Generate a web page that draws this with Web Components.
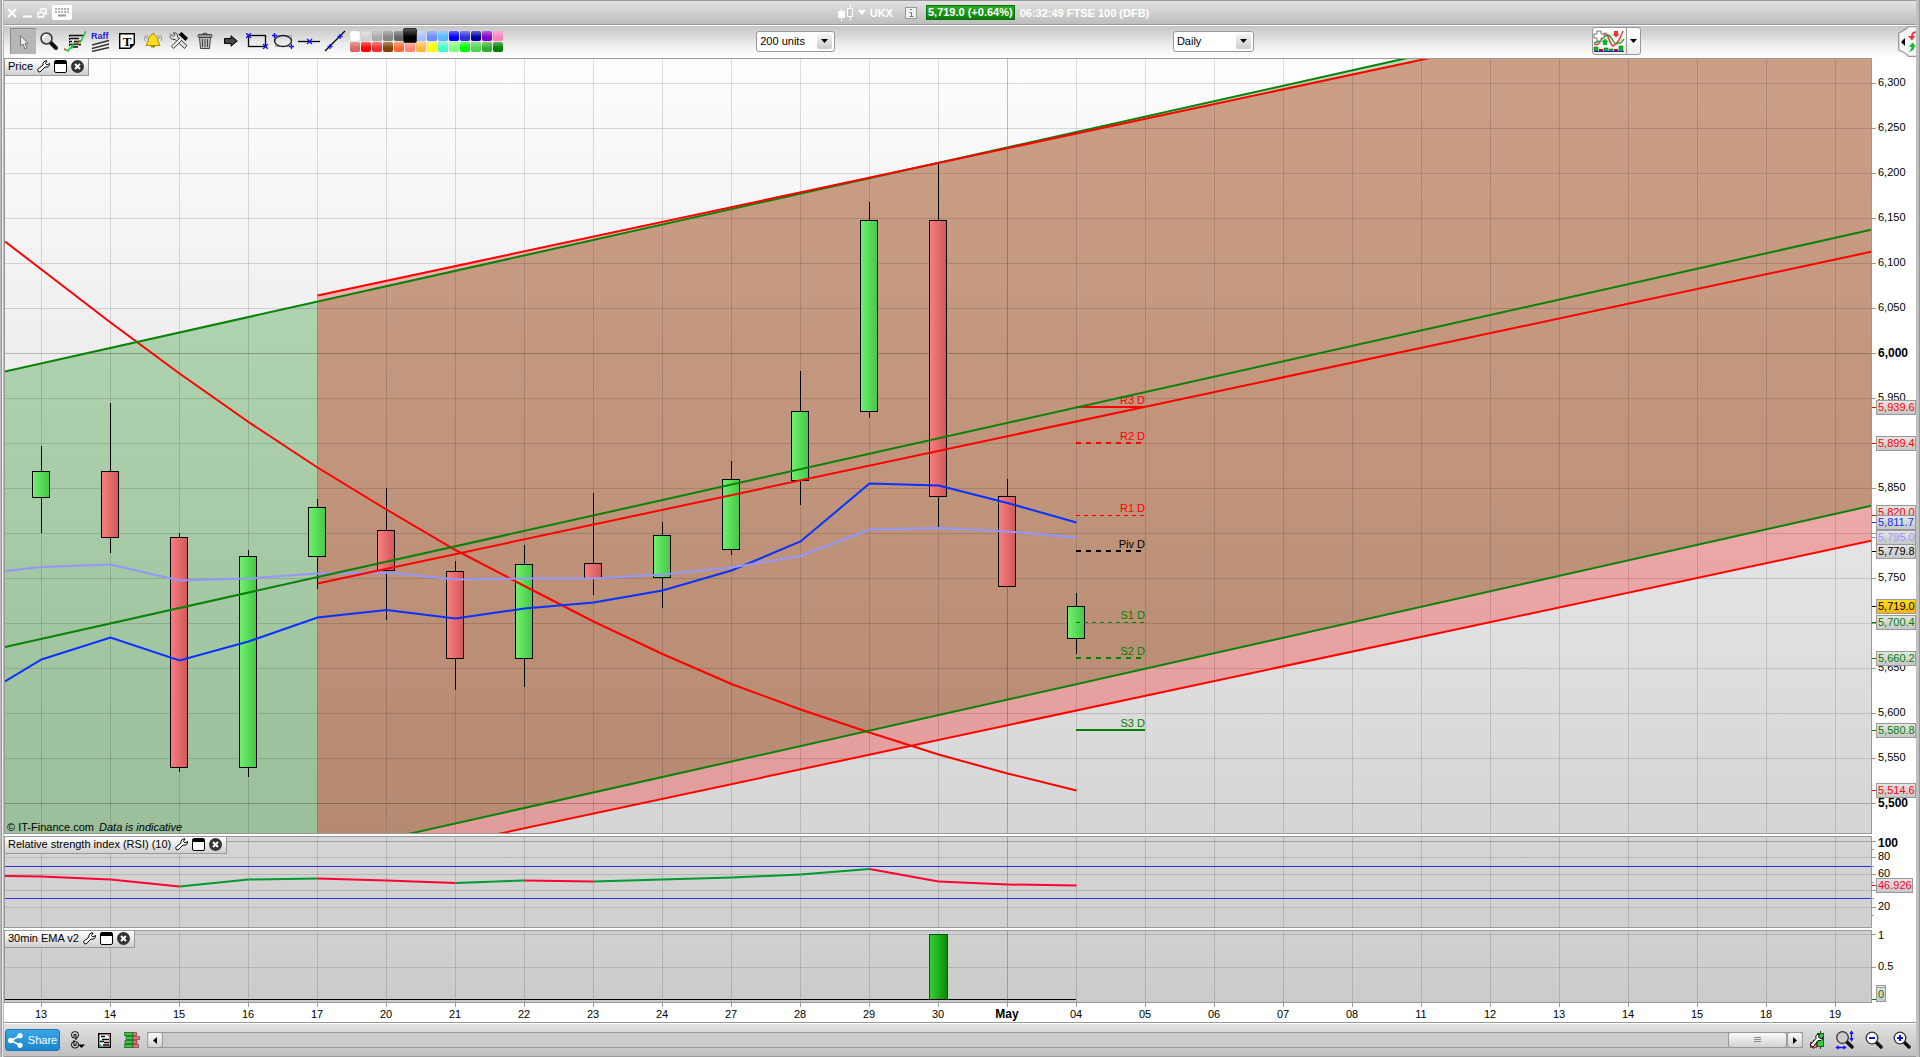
<!DOCTYPE html>
<html lang="en">
<head>
<meta charset="utf-8">
<title>UKX - FTSE 100 (DFB)</title>
<style>
  html, body { margin: 0; height: 100%; }
  body { font: 11px/16px "Liberation Sans", Arial, sans-serif; color: #000; background: #fff; }
</style>
</head>
<body>
<trading-window></trading-window>
<script>
const ICONS = {
  close: [10, 10, '<path d="M1 1L9 9M9 1L1 9" stroke="#fff" stroke-width="2"/>'],
  minimise: [10, 10, '<path d="M1 8.500H10" stroke="#fff" stroke-width="2"/>'],
  restore: [10, 10, '<path d="M3.500 3V1H9V6H7M1 4.500H6.500V9H1Z" fill="none" stroke="#fff" stroke-width="1.500"/>'],
  keyboard: [20, 15, '<rect width="20" height="15" rx="2" fill="#fff"/><path d="M3 4h14M3 7h14" stroke="#999" stroke-width="1.500" stroke-dasharray="2 1"/><path d="M6 10.500h8" stroke="#999" stroke-width="2"/>'],
  candles: [16, 16, '<path d="M3.500 4v12M12.500 0v15" stroke="#fff"/><rect x="0" y="6" width="7" height="7" fill="#fff"/><rect x="9.500" y="3.500" width="5" height="8" fill="#c9c9c9" stroke="#fff"/>'],
  caretWhite: [8, 5, '<path d="M0 0H8L4 5Z" fill="#fff"/>'],
  caret: [7, 4, '<path d="M0 0H7L3.500 4Z"/>'],
  info: [12, 12, '<rect x=".5" y=".5" width="11" height="11" fill="#f2f2f2" stroke="#999"/><path d="M5 2.500h2M4.500 5.500h2v3.500M4.500 9.500h4" stroke="#777" fill="none"/>'],
  cursor: [25, 25, '<path d="M9.500 6.500V17L12 15L14 20L16 19L14 14.500H17Z" fill="#eee" stroke="#777"/>'],
  magnifier: [18, 18, '<path d="M10.500 10.500L16 16" stroke="#111" stroke-width="4" stroke-linecap="round"/><circle cx="6.500" cy="6.500" r="5.500" fill="#ddd" stroke="#333" stroke-width="1.500"/><path d="M3 6.500Q3.500 3 7 3" stroke="#fff" stroke-width="2" fill="none"/>'],
  strategy: [22, 22, '<path d="M5 5.500h14M6 8.500h9M5 11.500h3M10 11.500h7M5 14.500h12M7 17h7" stroke="#111" stroke-width="1.500"/><path d="M5.500 5v11" stroke="#111" stroke-dasharray="2 1"/><path d="M0 19l2 1" stroke="#e22" stroke-width="1.500"/><path d="M1 19l3 2l2-3l2 0l2-5l3 1l2-3l2 0l5-10" fill="none" stroke="#1c3" stroke-width="1.500"/><path d="M12 14l3-3" stroke="#e22" stroke-width="1.500"/>'],
  raff: [20, 22, '<text x="0" y="9" font-size="9" fill="#22d" font-family="Liberation Sans, sans-serif" font-weight="700">Raff</text><path d="M1 15L18 10.500M1 18.500L18 14M1 21.500L18 17.500" stroke="#333" stroke-width="1.300"/>'],
  text: [16, 16, '<path d="M.7.7H15.300V11L11 15.300H.7Z" fill="#fff" stroke="#000" stroke-width="1.400"/><path d="M11 15v-4h4z"/><text x="8" y="12.500" text-anchor="middle" font-size="13" font-weight="700" font-family="Liberation Serif, serif">T</text>'],
  bell: [20, 18, '<path d="M10 1.500Q11.500 1.500 11.500 3Q15 4.500 15 9L17 13.500H3L5 9Q5 4.500 8.500 3Q8.500 1.500 10 1.500Z" fill="#fd2" stroke="#a80"/><path d="M8 14.500h4" stroke="#a80" stroke-width="2"/><path d="M3 3Q0 6 2 9M5 3Q3 5 4 7M17 3Q20 6 18 9M15 3Q17 5 16 7" fill="none" stroke="#999"/>'],
  tools: [20, 18, '<path d="M1 1.500L4 4.500L6 2.500L4 1Q9 0 8.500 5L18 13.500L15.500 16.500L6 7.500Q1 8 1 3.500" fill="#ddd" stroke="#444"/><path d="M11 6L2.500 14L4.500 16.500L13 8" fill="#eee" stroke="#444"/><path d="M9.500 2.500L12.500 0L19 6L16.500 9Z"/>'],
  trash: [16, 18, '<path d="M2.500 5.500H13.500L12.500 16.500H3.500Z" fill="#bbb" stroke="#444"/><rect x="1" y="2.500" width="14" height="3" rx="1" fill="#999" stroke="#444"/><path d="M5.500 2Q8 0 10.500 2M5.500 7v8M8 7v8M10.500 7v8" fill="none" stroke="#444"/>'],
  arrow: [14, 12, '<path d="M.5 3.500H7V.8L13.300 6L7 11.200V8.500H.5Z" fill="#444" stroke="#000"/>'],
  rect: [22, 16, '<rect x="2.500" y="2.500" width="17" height="11" fill="none" stroke="#000" stroke-width="1.300"/><path d="M0 0l5 5M5 0L0 5M17 11l5 5M22 11l-5 5" stroke="#11f" stroke-width="1.300"/>'],
  ellipse: [22, 16, '<rect x="3.500" y="2.500" width="16" height="11" fill="none" stroke="#aaa"/><ellipse cx="11" cy="8" rx="8.500" ry="5.500" fill="none" stroke="#222" stroke-width="1.300"/><path d="M0 2.500h5M2.500 0v5M17 13.500h5M19.500 11v5" stroke="#11f" stroke-width="1.300"/>'],
  hline: [22, 8, '<path d="M0 4.500H22" stroke="#000" stroke-width="1.300"/><path d="M9 2l5 5M14 2L9 7" stroke="#11f" stroke-width="1.300"/>'],
  diag: [22, 22, '<path d="M1 21L21 1" stroke="#000" stroke-width="1.300"/><path d="M3.500 16.500h5M6 14v5M13.500 6.500h5M16 4v5" stroke="#11f" stroke-width="1.300"/>'],
  wrench: [13, 13, '<path d="M.6 9.500L6 5Q5.500 1 10 .8L8.500 3.500L10 5L12.500 3.500Q12.500 8 8 7L3 12Q1 12.500 .6 9.500Z" fill="#fff" stroke="#000"/>'],
  pane: [13, 13, '<rect x=".5" y=".5" width="12" height="12" rx="1.500" fill="#fff" stroke="#000"/><path d="M1 1h11v3H1z"/>'],
  remove: [13, 13, '<circle cx="6.500" cy="6.500" r="6.500" fill="#333"/><path d="M4 4l5 5M9 4L4 9" stroke="#fff" stroke-width="2"/>'],
  indicators: [32, 22, '<path d="M11 6Q14 1 20 15Q16 13 11 6ZM22 13Q27 12 30 3L29 12Z" fill="#d5e0cc"/><path d="M1 14Q6 17 10 6Q12 -1 16 9T21 15Q25 14 30 1" fill="none" stroke="#d33" stroke-width="1.300"/><path d="M1 13Q6 12 11 7Q15 2 19 9T25 13Q28 14 31 9" fill="none" stroke="#292" stroke-width="1.300"/><path d="M4 1h4v3h3v4H8v3H4V8H1V4h3z" fill="#fff" stroke="#777"/><path d="M10 15V12H8.500L12 8.500L15.500 12H14V15Z" fill="#0b2"/><path d="M21 1h4v3h1.500L23 7.500L19.500 4H21z" fill="#e33"/><path d="M1 17h4v4H1zM11 18h4v3h-4zM16 19h4v2h-4zM26 16h4v5h-4z" fill="#1b1" stroke="#062" stroke-width=".5"/><path d="M6 19h4v2H6zM21 19h4v2h-4z" fill="#c11"/><path d="M1 21.500H31" stroke="#22d"/>'],
  panelTab: [18, 31, '<path d="M18 .7H10.500Q8 4 .7 7V24Q8 27 10.500 30.300H18" fill="#f6f6f6" stroke="#999" stroke-width="1.300"/><path d="M7 12v8l-4-4z"/><path d="M17.500 5Q13 6 13 10H10L14 14.500L17 10H15Q15 7 18 7Z" fill="#e33"/><path d="M10 25.500Q13 25 13.500 21H11L14.500 16.500L18 20.500H16.500Q16 26 10 25.500Z" fill="#1b3"/>'],
  share: [15, 15, '<path d="M12.500 2.500L3 7.500L12.500 12.500" fill="none" stroke="#fff" stroke-width="1.500"/><g fill="#fff"><circle cx="12" cy="2.700" r="2.600"/><circle cx="2.700" cy="7.500" r="2.700"/><circle cx="12" cy="12.300" r="2.600"/></g>'],
  chain: [15, 18, '<g fill="none" stroke="#000"><rect x="1.500" y=".7" width="7" height="6.500" rx="3"/><rect x="1.500" y="10.500" width="7" height="6.500" rx="3"/><path d="M4 6V3.500h2V9M4 9v5.500h2V12"/></g><path d="M8 13.500h7L11.500 17z"/>'],
  list: [13, 15, '<path d="M.7.7H12.300V14.300H.7Z" fill="#fff" stroke="#000" stroke-width="1.400"/><path d="M3 3.500h4M4 6.500h7M2 8.500h4M6 9.500h5M5 12h6" stroke="#000" stroke-width="1.500"/><path d="M8 1h4v4z" fill="#e66"/><path d="M1 10v4h4z" fill="#1b3"/>'],
  book: [16, 16, '<path d="M0 .5h9v3H0zM2 4.500h7v3H2zM1 8.500h8v3H1zM0 12.500h9v3H0z" fill="#3c4" stroke="#151" stroke-width=".7"/><path d="M9 .5h3.500v3H9zM9 4.500h6.500v3H9zM9 8.500h4v3H9zM9 12.500h5.500v3H9z" fill="#e77" stroke="#733" stroke-width=".7"/>'],
  left: [4, 7, '<path d="M4 0V7L0 3.500Z"/>'],
  right: [4, 7, '<path d="M0 0V7L4 3.500Z"/>'],
  grip: [7, 6, '<path d="M0 .5h7M0 2.500h7M0 4.500h7" stroke="#888"/>'],
  candleTool: [16, 20, '<path d="M4.500 10v9M11.500 1v18" stroke="#333"/><rect x="1.500" y="12.500" width="6" height="5" fill="#d88" stroke="#844"/><rect x="8.500" y="3.500" width="6" height="13" fill="#3c4" stroke="#161"/><path d="M1 15L7 8.500Q6 4 10.500 4.500L9.500 7L11 8.500L14 7.500Q13 11.500 9 10.500L4 17Z" fill="#fff" stroke="#000"/>'],
  zoomFit: [20, 20, '<path d="M11 11L17 17" stroke="#111" stroke-width="3.500" stroke-linecap="round"/><circle cx="7.500" cy="7.500" r="5.800" fill="#ccc" stroke="#333" stroke-width="1.300"/><path d="M16.500 2v8M2 17.500h8M15 4l1.500-2.500L18 4M15 8l1.500 2.500L18 8M3.500 16L1.500 17.500L3.500 19M8.500 16l2 1.500l-2 1.500" fill="none" stroke="#11f" stroke-width="1.300"/>'],
  zoomOut: [18, 18, '<path d="M11 11L16 16" stroke="#111" stroke-width="3.500" stroke-linecap="round"/><circle cx="7" cy="7" r="5.800" fill="#fff" stroke="#333" stroke-width="1.300"/><path d="M4 7h6" stroke="#11f" stroke-width="2"/>'],
  zoomIn: [18, 18, '<path d="M11 11L16 16" stroke="#111" stroke-width="3.500" stroke-linecap="round"/><circle cx="7" cy="7" r="5.800" fill="#fff" stroke="#333" stroke-width="1.300"/><path d="M4 7h6M7 4v6" stroke="#11f" stroke-width="2"/>']
};

const BUTTON_RESET = `button { font: inherit; color: inherit; margin: 0; padding: 0; border: 0; background: none; display: flex; align-items: center; justify-content: center; }`;

class ShadowElement extends HTMLElement {
  constructor() { super(); this.attachShadow({ mode: 'open' }); }
  connectedCallback() { this.shadowRoot.innerHTML = this.template(); this.ready(); }
  template() { return ''; }
  ready() {}
}

customElements.define('ui-icon', class extends ShadowElement {
  template() {
    const [w, h, body] = ICONS[this.getAttribute('name')];
    return `<style>:host{display:block;flex:none;width:${w}px;height:${h}px}svg{display:block}</style>
      <svg width="${w}" height="${h}" viewBox="0 0 ${w} ${h}" aria-hidden="true">${body}</svg>`;
  }
});

customElements.define('title-bar', class extends ShadowElement {
  template() {
    return `<style>${BUTTON_RESET}
      :host { display: flex; align-items: center; box-sizing: border-box; height: 25px; padding: 0 1px 0 3px;
        background: linear-gradient(#e2e2e2, #bdbdbd); border-top: 1px solid #999; border-bottom: 1px solid #999; color: #fff; font-weight: 700; }
      .window { display: flex; align-items: center; gap: 5px; }
      .quote { margin: 0 auto; display: flex; align-items: center; gap: 5px; }
      .symbol { display: flex; align-items: center; gap: 4px; margin-right: 7px; }
      .change { background: linear-gradient(#2dab2d, #087d08); border: 1px solid #067306; padding: 0 1px; line-height: 13px; margin-left: 4px; }
    </style>
    <div class="window">
      <button aria-label="Close"><ui-icon name="close"></ui-icon></button>
      <button aria-label="Minimise"><ui-icon name="minimise"></ui-icon></button>
      <button aria-label="Restore"><ui-icon name="restore"></ui-icon></button>
      <button aria-label="Keyboard"><ui-icon name="keyboard"></ui-icon></button>
    </div>
    <div class="quote">
      <button class="symbol"><ui-icon name="candles"></ui-icon><ui-icon name="caretWhite"></ui-icon><span>UKX</span></button>
      <button aria-label="Information"><ui-icon name="info"></ui-icon></button>
      <span class="change">5,719.0 (+0.64%)</span>
      <span>06:32:49 FTSE 100 (DFB)</span>
    </div>`;
  }
});

customElements.define('drop-down', class extends ShadowElement {
  template() {
    const label = this.getAttribute('label');
    return `<style>
      :host { display: block; flex: none; }
      .box { display: grid; align-items: center; width: var(--width, 79px); height: 21px; box-sizing: border-box; }
      select, .cap { grid-area: 1 / 1; }
      select { appearance: none; font: inherit; color: #000; height: 21px; width: 100%; box-sizing: border-box; padding: 0 20px 0 3px;
        background: #fff; border: 1px solid #999; border-radius: 3px; }
      .cap { justify-self: end; margin-right: 3px; width: 15px; height: 15px; display: flex; align-items: center; justify-content: center;
        background: linear-gradient(#f4f4f4, #ccc); border-radius: 2px; pointer-events: none; z-index: 1; }
    </style>
    <div class="box"><select aria-label="${label}"><option>${this.getAttribute('value')}</option></select>
    <span class="cap"><ui-icon name="caret"></ui-icon></span></div>`;
  }
});

customElements.define('colour-palette', class extends ShadowElement {
  template() {
    const colours = ['#fff','#d2d2d2','#aaa','#888','#666','#000','#a8c4ff','#6a8cff','#55bbff','#0000ff','#3030dd','#0000a0','#8800cc','#ff80c0',
      '#dd6666','#ff0000','#ee3030','#884000','#ff6a33','#ff8c74','#ffbb44','#ffff00','#44ffcc','#80ff80','#00ff00','#50d850','#30b030','#008000'];
    return `<style>
      :host { display: block; flex: none; }
      div { display: grid; grid-template-columns: repeat(14, 10px); grid-auto-rows: 10px; gap: 1px; }
      button { padding: 0; border: 0; border-radius: 2px; background: linear-gradient(#fff6, #fff0 60%) var(--c); box-shadow: inset 0 0 1px #0005; }
      button.on { margin: -3px -2px -2px; border: 1px solid #333; background: linear-gradient(#555, #000 60%); z-index: 1; }
    </style><div>${colours.map((c, i) => `<button aria-label="Colour ${c}" style="--c:${c}" class="${i === 5 ? 'on' : ''}"></button>`).join('')}</div>`;
  }
});

customElements.define('tool-bar', class extends ShadowElement {
  template() {
    const tools = ['cursor','magnifier','strategy','raff','text','bell','tools','trash','arrow','rect','ellipse','hline','diag'];
    return `<style>${BUTTON_RESET}
      :host { display: flex; align-items: center; box-sizing: border-box; height: 33px; padding: 0 0 2px 6px;
        background: linear-gradient(#c6c6c6, #e6e6e6 50%, #e9e9e9 50%, #fff); border-top: 1px solid #fff; }
      .tools { display: flex; flex: none; margin-right: 2px; }
      .tools button { width: 26px; height: 26px; }
      .tools .on { background: #b6b6b6; box-shadow: inset 1px 1px #8a8a8a; }
      .g1 { flex: 60; } .g2 { flex: 80; } .g3 { flex: 61; }
      .wide { --width: 81px; }
      .add { display: flex; height: 28px; box-sizing: border-box; border: 1px solid #999; border-radius: 3px; background: linear-gradient(#fff, #eee); }
      .add button:first-child { width: 34px; border-right: 1px solid #999; }
      .add button:last-child { width: 13px; }
    </style>
    <div class="tools">${tools.map((t, i) => `<button aria-label="${t}" class="${i ? '' : 'on'}"><ui-icon name="${t}"></ui-icon></button>`).join('')}</div>
    <colour-palette></colour-palette>
    <span class="g1"></span>
    <drop-down label="Units" value="200 units"></drop-down>
    <span class="g2"></span>
    <drop-down class="wide" label="Period" value="Daily"></drop-down>
    <span class="g2"></span>
    <div class="add"><button aria-label="Add indicator"><ui-icon name="indicators"></ui-icon></button><button aria-label="More"><ui-icon name="caret"></ui-icon></button></div>
    <span class="g3"></span>
    <button aria-label="Side panel"><ui-icon name="panelTab"></ui-icon></button>`;
  }
});

/* A plot with its value axis. Subclasses draw in a 1866-unit wide space that is scaled to the box. */
const STEP = 69, FIRST = 41, COUNT = 27;
const xs = Array.from({ length: COUNT }, (_, i) => FIRST + i * STEP);
const GRID = 'rgba(0,0,0,.13)', MAJOR = 'rgba(0,0,0,.24)';

class ChartPanel extends ShadowElement {
  template() {
    return `<style>${BUTTON_RESET}
      :host { display: grid; grid-template-columns: minmax(0, 1fr) 44px; position: relative; box-sizing: border-box; }
      .plot { border: 1px solid #999; background: linear-gradient(var(--from), var(--to)); min-width: 0; min-height: 0; overflow: hidden; }
      .axis { padding: 1px 0; min-height: 0; }
      svg { display: block; width: 100%; height: 100%; overflow: visible; }
      .plot svg { overflow: hidden; }
      header { position: absolute; left: 1px; top: 1px; display: flex; align-items: center; gap: 4px; height: 14px; padding: 0 4px 2px 3px;
        background: linear-gradient(#fff, #cfcfcf); border-right: 1px solid #999; border-bottom: 1px solid #999; }
      ::slotted(*) { position: absolute; left: 3px; bottom: 0; }
    </style>
    <div class="plot"><svg role="img" aria-label="${this.title_}"></svg></div><div class="axis"><svg></svg></div>
    <header><span>${this.title_}</span>
      <button aria-label="Settings"><ui-icon name="wrench"></ui-icon></button>
      <button aria-label="Detach"><ui-icon name="pane"></ui-icon></button>
      <button aria-label="Remove"><ui-icon name="remove"></ui-icon></button></header>
    <slot></slot>`;
  }
  ready() {
    [this.plotSvg, this.axisSvg] = this.shadowRoot.querySelectorAll('svg');
    this.draw();
    new ResizeObserver(() => this.draw()).observe(this);
  }
  draw() {
    const box = this.plotSvg.getBoundingClientRect();
    this.kx = box.width / 1866; this.ky = box.height / this.span; this.h = box.height; this.w = box.width;
    this.plotSvg.innerHTML = this.plot();
    this.axisSvg.innerHTML = `<defs><linearGradient id="t" x2="0" y2="1"><stop stop-color="#e6e6e6"/><stop offset="1" stop-color="#c6c6c6"/></linearGradient>
      <linearGradient id="gold" x2="0" y2="1"><stop stop-color="#ffe020"/><stop offset="1" stop-color="#f2b410"/></linearGradient></defs>` + this.axis();
  }
  X(x) { return (x - 5) * this.kx; }
  Y(y) { return (y - this.top_) * this.ky; }
  px(v) { return Math.floor(v) + .5; }
  vgrid() { return xs.map(x => { const p = this.px(this.X(x)); return `<path d="M${p} 0V${this.h}" stroke="${x === 1007 ? MAJOR : GRID}"/>`; }).join(''); }
  hline(y, c = GRID) { const p = this.px(this.Y(y)); return `<path d="M0 ${p}H${this.w}" stroke="${c}"/>`; }
  poly(pts, c, w = 2) { return `<polyline points="${pts.map(([x, y]) => (x === 5 ? 0 : this.X(x + .5)) + ',' + this.Y(y + .5)).join(' ')}" fill="none" stroke="${c}" stroke-width="${w}"/>`; }
  tick(y, c = '#999', len = 4) { return `<path d="M0 ${this.px(this.Y(y))}h${len}" stroke="${c}"/>`; }
  label(y, text, bold, dy = bold ? 4 : 3) { return `<text x="6" y="${Math.floor(this.Y(y)) + dy}" font-size="${bold ? 12 : 11}" ${bold ? 'font-weight="700"' : ''}>${text}</text>`; }
  tag(y, text, c, at = y, w = 39, fill = 't') {
    const p = Math.floor(this.Y(at));
    return `${this.tick(y, c)}<rect x="4.500" y="${p - 6.5}" width="${w}" height="14" fill="url(#${fill})" stroke="#999"/><text x="6" y="${p + 4}" font-size="11" fill="${c}">${text}</text>`;
  }
}

customElements.define('price-chart', class extends ChartPanel {
  title_ = 'Price'; top_ = 59; span = 774;
  plot() {
    const line = ys => ys.map((y, i) => [i ? FIRST + (i - 1) * STEP : 5, y]);
    const slow = [241,269,322,373,421.5,467,509,549.5,585.5,621,653.5,683.5,709,732,754,773,790];
    const fast = [681,659,637,660,641,617,609.5,618,608,602,590,570,541,483,485,502.5,522];
    const mid = [570.5,566.5,564,580,578,573,572,579,578,578,574,567,555.5,529,527.5,531,537];
    const candles = [[446,471,497,533,1],[403,471,537,553,0],[533,537,767,772,0],[550,556,767,777,1],[499,507,556,589,1],[488,530,570,620,0],
      [561,571,658,690,0],[545,564,658,687,1],[493,563,578,595,0],[522,535,577,608,1],[461,479,549,555,1],[371,411,480,505,1],
      [202,220,411,418,1],[163,220,496,527,0],[479,496,586,587,0],[593,606,638,654,1]];
    const poly = (pts, fill) => `<polygon points="${pts.map(([x, y]) => this.X(x) + ',' + this.Y(y)).join(' ')}" fill="${fill}"/>`;
    const G = { up: [[5,371],[1872,-46.500]], mid: [[5,646.500],[1872,229]], low: [[5,924],[1872,505]] };
    const R = { up: [[317,295],[1872,-37]], mid: [[317,583],[1872,251]], low: [[317,872],[1872,540]] };
    const pivots = [['R3 D',407,'red',2,''],['R2 D',443,'red',2,'5 5'],['R1 D',515,'red',1,'4 4'],['Piv D',551,'#000',2,'5 5'],
      ['S1 D',622,'green',1,'4 4'],['S2 D',658,'green',2,'5 5'],['S3 D',730,'green',2,'']];
    let s = `<defs><linearGradient id="up"><stop stop-color="#70f070"/><stop offset="1" stop-color="#45c845"/></linearGradient>
      <linearGradient id="down"><stop stop-color="#fa8080"/><stop offset="1" stop-color="#cf5858"/></linearGradient></defs>`;
    s += poly([...G.up, ...[...G.low].reverse()], 'rgba(0,128,0,.27)');
    s += poly([...R.up, ...[...R.low].reverse()], 'rgba(255,0,0,.27)');
    s += this.vgrid();
    for (let y = 83; y < 820; y += 45) s += this.hline(y, y === 353 || y === 803 ? MAJOR : GRID);
    candles.forEach(([hi, t, b, lo, up], i) => {
      const c = this.px(this.X(xs[i]));
      const top = this.px(this.Y(t)), bottom = this.px(this.Y(b));
      s += `<path d="M${c} ${this.Y(hi)}V${this.Y(lo)}" stroke="#000"/><rect x="${c - 9}" y="${top}" width="17" height="${bottom - top}" fill="url(#${up ? 'up' : 'down'})" stroke="#000"/>`;
    });
    pivots.forEach(([name, y, c, w, dash]) => {
      const py = Math.floor(this.Y(y)) + (w === 1 ? .5 : 0), x1 = this.X(1076), x2 = this.X(1145);
      s += `<path d="M${x1} ${py}H${x2}" stroke="${c}" stroke-width="${w}" stroke-dasharray="${dash}"/><text x="${x2}" y="${Math.floor(py) - 3}" text-anchor="end" font-size="11" fill="${c}">${name}</text>`;
    });
    s += this.poly(line(slow), 'red') + this.poly(line(fast), '#0a32ff') + this.poly(line(mid), '#9696ff');
    for (const k of ['up', 'mid', 'low']) s += this.poly(G[k], '#0a820a') ;
    for (const k of ['up', 'mid', 'low']) s += this.poly(R[k], 'red');
    return s;
  }
  axis() {
    let s = '';
    for (let y = 83, v = 6300; v >= 5500; y += 45, v -= 50) {
      s += this.tick(y);
      if (![5900, 5800, 5700].includes(v)) s += this.label(y, v.toLocaleString('en-GB'), v === 6000 || v === 5500);
    }
    return s + this.tag(407, '5,939.6', 'red') + this.tag(443, '5,899.4', 'red') + this.tag(515, '5,820.0', 'red', 512) + this.tag(522, '5,811.7', '#0a32ff')
      + this.tag(537, '5,795.0', '#9696ff') + this.tag(551, '5,779.8', '#000') + this.tag(606, '5,719.0', '#000', 606, 39, 'gold')
      + this.tag(622, '5,700.4', 'green') + this.tag(658, '5,660.2', 'green') + this.tag(730, '5,580.8', 'green') + this.tag(790, '5,514.6', 'red');
  }
});

customElements.define('rsi-chart', class extends ChartPanel {
  title_ = 'Relative strength index (RSI) (10)'; top_ = 837; span = 90;
  plot() {
    const ys = [875.5,876,879,886,879,878,880,882.5,880,881,879,877,874,868.5,881,884,885];
    const up = [0,0,0,0,1,1,0,0,1,0,1,1,1,1,0,0,0];
    let s = this.vgrid() + this.hline(841, MAJOR) + [857, 874, 890, 907].map(y => this.hline(y)).join('') + this.hline(866, '#3030dc') + this.hline(898, '#3030dc');
    for (let i = 1; i < ys.length; i++) s += this.poly([[i === 1 ? 5 : xs[i - 2], ys[i - 1]], [xs[i - 1], ys[i]]], up[i] ? '#009a33' : '#ff0033');
    return s;
  }
  axis() {
    return [841, 857, 874, 890, 907].map(y => this.tick(y)).join('') + [849, 866, 882, 898, 915].map(y => this.tick(y, '#999', 2)).join('')
      + this.label(843, '100', true) + this.label(857, '80') + this.label(874, '60') + this.label(907, '20') + this.tag(885, '46.926', '#ff0033', 885, 36);
  }
});

customElements.define('ema-chart', class extends ChartPanel {
  title_ = '30min EMA v2'; top_ = 931; span = 71;
  plot() {
    const x = this.px(this.X(938)), t = this.px(this.Y(934)), b = this.px(this.Y(999));
    return `<defs><linearGradient id="bar"><stop stop-color="#38d038"/><stop offset="1" stop-color="#088a08"/></linearGradient></defs>`
      + this.vgrid() + this.hline(934) + this.hline(967)
      + `<rect x="${x - 9}" y="${t}" width="18" height="${b - t}" fill="url(#bar)" stroke="#065a06"/><path d="M0 ${b}H${this.X(1076)}" stroke="#000"/>`;
  }
  axis() {
    const y = Math.floor(this.Y(985));
    return this.tick(934) + this.tick(967) + this.label(934, '1', false, 5) + this.label(967, '0.5') + this.tick(999, 'green')
      + `<rect x="4.500" y="${y + .5}" width="9" height="16" fill="url(#t)" stroke="#999"/><path d="M4 ${y + 2.5}h10" stroke="#999"/><text x="6" y="${y + 13}" font-size="11" fill="green">0</text>`;
  }
});

customElements.define('date-axis', class extends ShadowElement {
  template() { return `<style>:host{display:block;height:19px;margin-right:45px}svg{display:block;width:100%;height:100%;overflow:visible}</style><svg></svg>`; }
  ready() { this.draw(); new ResizeObserver(() => this.draw()).observe(this); }
  draw() {
    const names = '13 14 15 16 17 20 21 22 23 24 27 28 29 30 May 04 05 06 07 08 11 12 13 14 15 18 19'.split(' ');
    const svg = this.shadowRoot.querySelector('svg'), k = (svg.getBoundingClientRect().width - 1) / 1866;
    svg.innerHTML = names.map((n, i) => {
      const x = Math.floor((xs[i] - 5) * k) + 1;
      return `<path d="M${x + .5} 0v4" stroke="#999"/><text x="${x}" y="15" text-anchor="middle" ${n === 'May' ? 'font-size="12" font-weight="700"' : 'font-size="11"'}>${n}</text>`;
    }).join('');
  }
});

customElements.define('status-bar', class extends ShadowElement {
  template() {
    return `<style>${BUTTON_RESET}
      :host { display: flex; align-items: center; box-sizing: border-box; height: 35px; padding: 1px 5px 0 1px; border-top: 1px solid #999; border-bottom: 1px solid #999;
        background: linear-gradient(#fff 1px, #e2e2e2 1px, #c0c0c0); }
      .share { width: 55px; height: 22px; gap: 5px; color: #fff; border: 1px solid #1678b8; border-radius: 3px; background: linear-gradient(#3aa4e4, #1d86cc); box-sizing: border-box; }
      .views { display: flex; align-items: center; gap: 13px; margin: 0 7px 0 10px; }
      .scroll { flex: 1; display: flex; height: 16px; box-sizing: border-box; border-top: 1px solid #999; border-bottom: 1px solid #999; background: #cbcbcb; }
      .scroll button { height: 16px; margin-top: -1px; box-sizing: border-box; width: 16px; border: 1px solid #999; border-radius: 3px; background: linear-gradient(#fafafa, #d2d2d2); }
      .scroll .thumb { width: 59px; margin-left: auto; }
      .zoom { display: flex; align-items: center; gap: 10px; margin-left: 6px; }
    </style>
    <button class="share"><ui-icon name="share"></ui-icon><span>Share</span></button>
    <div class="views">
      <button aria-label="Link"><ui-icon name="chain"></ui-icon></button>
      <button aria-label="List"><ui-icon name="list"></ui-icon></button>
      <button aria-label="Order book"><ui-icon name="book"></ui-icon></button>
    </div>
    <div class="scroll">
      <button aria-label="Scroll left"><ui-icon name="left"></ui-icon></button>
      <button class="thumb" aria-label="Scroll position"><ui-icon name="grip"></ui-icon></button>
      <button aria-label="Scroll right"><ui-icon name="right"></ui-icon></button>
    </div>
    <div class="zoom">
      <button aria-label="Chart style"><ui-icon name="candleTool"></ui-icon></button>
      <button aria-label="Fit"><ui-icon name="zoomFit"></ui-icon></button>
      <button aria-label="Zoom out"><ui-icon name="zoomOut"></ui-icon></button>
      <button aria-label="Zoom in"><ui-icon name="zoomIn"></ui-icon></button>
    </div>`;
  }
});

customElements.define('trading-window', class extends ShadowElement {
  template() {
    return `<style>
      :host { display: flex; flex-direction: column; box-sizing: border-box; min-height: 100vh; padding: 0 4px;
        background: linear-gradient(90deg, #bbb 1px, #999 1px 2px, #eee 2px 3px, #bbb 3px) left / 4px 100% no-repeat,
          linear-gradient(90deg, #c0c0c0 3px, #999 3px) right / 4px 100% no-repeat, #fff; }
      main { flex: 1; display: flex; flex-direction: column; gap: 2px; }
      price-chart { flex: 1; min-height: 400px; --from: #fdfdfd; --to: #d5d5d5; }
      rsi-chart { height: 92px; --from: #d5d5d5; --to: #d0d0d0; }
      ema-chart { height: 73px; --from: #d0d0d0; --to: #cbcbcb; }
      .credit { line-height: 14px; }
      i { margin-left: 2px; }
    </style>
    <title-bar></title-bar>
    <tool-bar></tool-bar>
    <main>
      <price-chart><span class="credit">© IT-Finance.com <i>Data is indicative</i></span></price-chart>
      <rsi-chart></rsi-chart>
      <ema-chart></ema-chart>
    </main>
    <date-axis></date-axis>
    <status-bar></status-bar>`;
  }
});
</script>
</body>
</html>
